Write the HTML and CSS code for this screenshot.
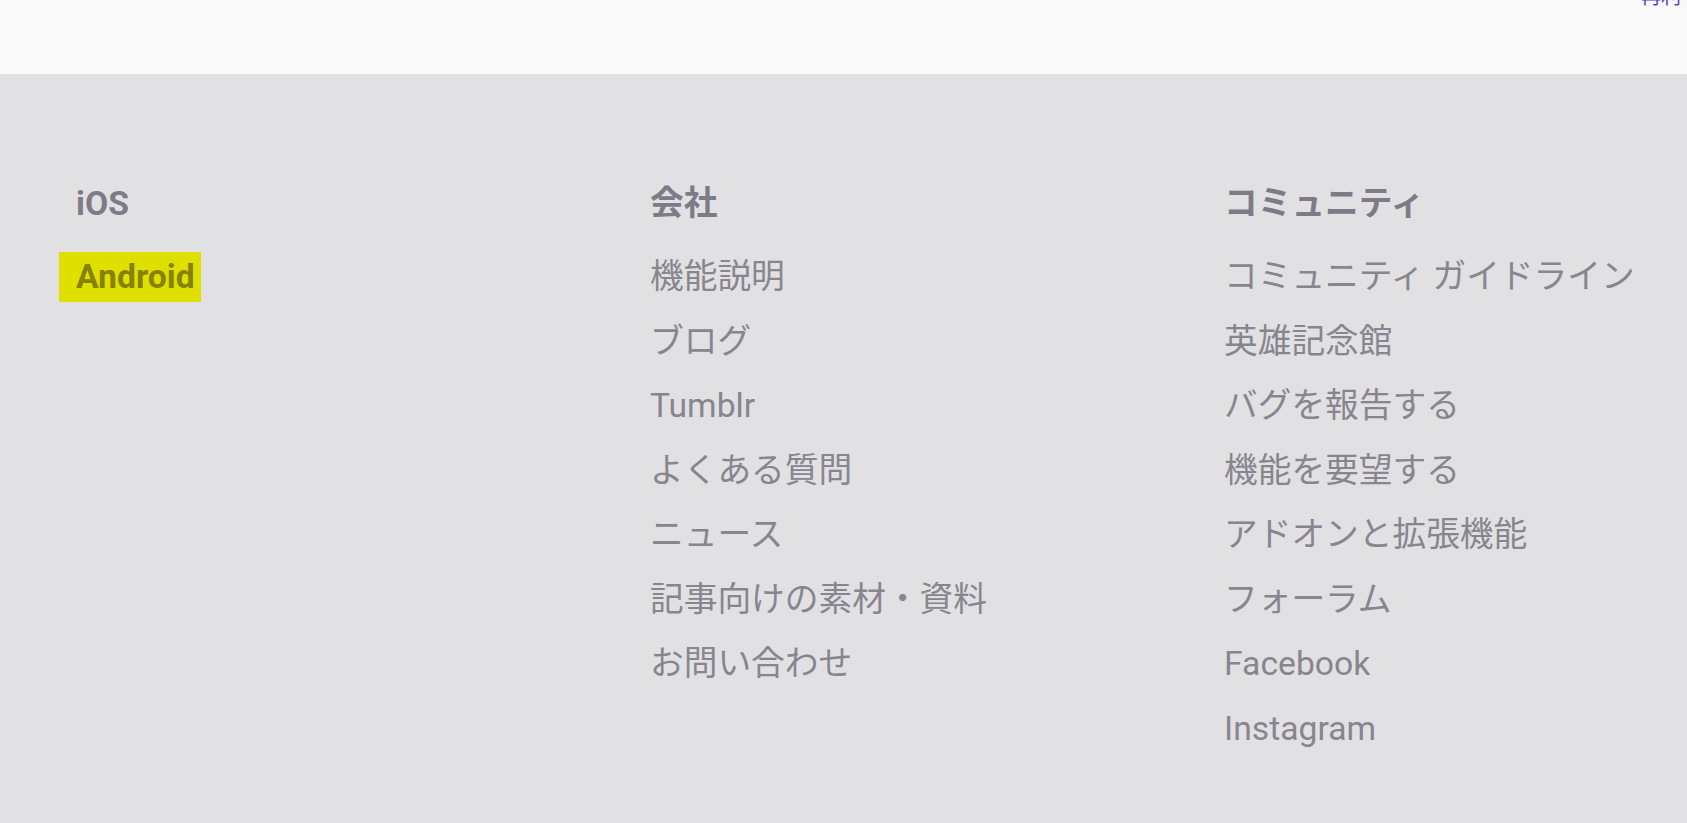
FILE: index.html
```html
<!DOCTYPE html>
<html lang="ja">
<head>
<meta charset="utf-8">
<title>Footer</title>
<link rel="stylesheet" href="styles.css">
</head>
<body>
<header class="topbar">
  <span class="topbar-link">再利</span>
</header>
<footer class="footer">
  <div class="col">
    <h3 class="col-title">iOS</h3>
    <ul class="links">
      <li><a class="link link-active" href="#">Android</a></li>
    </ul>
  </div>
  <div class="col">
    <h3 class="col-title">会社</h3>
    <ul class="links">
      <li><a class="link" href="#">機能説明</a></li>
      <li><a class="link" href="#">ブログ</a></li>
      <li><a class="link" href="#">Tumblr</a></li>
      <li><a class="link" href="#">よくある質問</a></li>
      <li><a class="link" href="#">ニュース</a></li>
      <li><a class="link" href="#">記事向けの素材・資料</a></li>
      <li><a class="link" href="#">お問い合わせ</a></li>
    </ul>
  </div>
  <div class="col">
    <h3 class="col-title">コミュニティ</h3>
    <ul class="links">
      <li><a class="link" href="#">コミュニティ ガイドライン</a></li>
      <li><a class="link" href="#">英雄記念館</a></li>
      <li><a class="link" href="#">バグを報告する</a></li>
      <li><a class="link" href="#">機能を要望する</a></li>
      <li><a class="link" href="#">アドオンと拡張機能</a></li>
      <li><a class="link" href="#">フォーラム</a></li>
      <li><a class="link" href="#">Facebook</a></li>
      <li><a class="link" href="#">Instagram</a></li>
    </ul>
  </div>
</footer>
</body>
</html>
```
FILE: styles.css
```css
html, body {
  margin: 0;
  padding: 0;
}
body {
  background: #e1e1e4;
  font-family: Roboto, "Noto Sans CJK JP", sans-serif;
  overflow: hidden;
  min-height: 823px;
}
.topbar {
  height: 74px;
  background: #f9f9f9;
  display: flex;
  justify-content: flex-end;
  align-items: flex-start;
  overflow: hidden;
}
.topbar-link {
  font-size: 20px;
  line-height: 20px;
  margin-top: -13px;
  margin-right: 6px;
  color: #5b3fc6;
}
.footer {
  display: grid;
  grid-template-columns: 574px 574px 1fr;
  padding: 105px 0 60px 76px;
}
.col-title {
  margin: 0 0 16px;
  font-size: 33.7px;
  line-height: 50px;
  font-weight: 700;
  color: #7e7b87;
}
.links {
  list-style: none;
  margin: 0;
  padding: 0;
}
.links li {
  font-size: 33.7px;
  line-height: 64.5px;
  height: 64.5px;
  white-space: nowrap;
}
.link {
  color: #88858f;
  text-decoration: none;
}
.link-active {
  display: inline-block;
  line-height: 50px;
  background: #e0e000;
  color: #858200;
  font-weight: 700;
  padding: 0 6px 0 17px;
  margin-left: -17px;
}
```
